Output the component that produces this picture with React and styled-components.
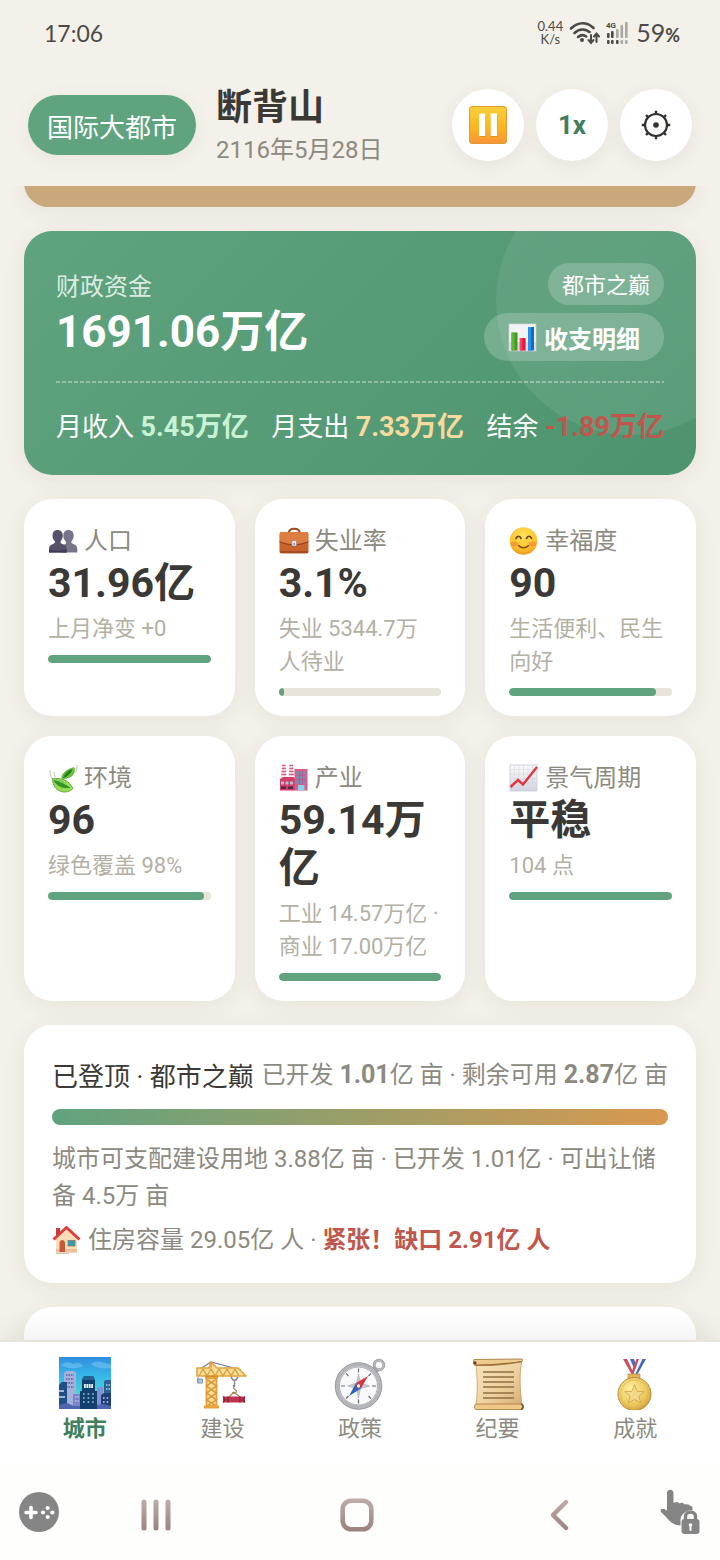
import React from "react";
import styled, { createGlobalStyle } from "styled-components";

const GlobalStyle = createGlobalStyle`
  * {
    box-sizing: border-box;
  }

  body {
    margin: 0;
    background: #f4f1ea;
    color: #3a3935;
    font-family: Roboto, "Noto Sans CJK SC", sans-serif;
  }

  button {
    border: 0;
    padding: 0;
    margin: 0;
    background: none;
    color: inherit;
    font: inherit;
    cursor: pointer;
  }

  h1, p {
    margin: 0;
  }

  svg {
    display: block;
    flex: none;
  }
`;

const Page = styled.div`
  display: flex;
  flex-direction: column;
  height: 100vh;
  overflow: hidden;
`;

/* ---------- status bar ---------- */

const StatusBar = styled.div`
  display: flex;
  align-items: center;
  justify-content: space-between;
  flex: none;
  height: 66px;
  padding: 0 40px 0 44px;
  color: #4b4a46;
`;

const Clock = styled.span`
  font-family: Lato, sans-serif;
  font-size: 23px;
`;

const StatusIcons = styled.div`
  display: flex;
  align-items: center;
  gap: 6px;
`;

const NetSpeed = styled.span`
  font-family: Lato, sans-serif;
  font-size: 13px;
  line-height: 13px;
  text-align: center;
`;

const Battery = styled.span`
  padding-left: 2px;
  font-family: Lato, sans-serif;
  font-size: 25px;
  line-height: 28px;

  small {
    font-size: 18px;
    font-weight: 700;
  }
`;

/* ---------- header ---------- */

const Header = styled.header`
  display: flex;
  align-items: center;
  flex: none;
  gap: 20px;
  height: 120px;
  padding: 0 28px 2px;
`;

const CityRank = styled.span`
  flex: none;
  height: 60px;
  padding: 3px 19px 0;
  border-radius: 30px;
  background: #5fa37f;
  color: #fff;
  font-size: 26px;
  line-height: 60px;
  box-shadow: 0 4px 20px rgba(70, 60, 40, 0.06);
`;

const CityInfo = styled.div`
  flex: 1;
  min-width: 0;
  padding-top: 3px;
`;

const CityName = styled.h1`
  font-size: 36px;
  font-weight: 700;
  line-height: 48px;
`;

const CityDate = styled.p`
  color: #8c8a80;
  font-size: 24px;
  line-height: 37px;
`;

const HeaderActions = styled.div`
  display: flex;
  gap: 12px;
`;

const RoundButton = styled.button`
  display: flex;
  align-items: center;
  justify-content: center;
  width: 72px;
  height: 72px;
  border-radius: 50%;
  background: #fff;
  color: #3f7f60;
  font-size: 26px;
  font-weight: 700;
  box-shadow: 0 4px 20px rgba(70, 60, 40, 0.07);
`;

/* ---------- content ---------- */

const Content = styled.main`
  display: flex;
  flex-direction: column;
  flex: 1;
  gap: 24px;
  min-height: 0;
  padding: 0 24px;
  overflow: hidden;

  > * {
    flex: none;
  }
`;

const Banner = styled.div`
  height: 49px;
  margin-top: -28px;
  border-radius: 28px;
  background: #c9a87c;
  box-shadow: 0 4px 24px rgba(70, 60, 40, 0.07);
`;

const FundsCard = styled.section`
  position: relative;
  padding: 32px 32px 26px;
  border-radius: 28px;
  overflow: hidden;
  background: linear-gradient(135deg, #5fa37f, #4d946e);
  color: #fff;
`;

const FundsShadow = styled.div`
  border-radius: 28px;
  box-shadow: 0 4px 24px rgba(70, 60, 40, 0.07);
`;

const Glow = styled.span`
  position: absolute;
  top: -64px;
  right: -68px;
  width: 268px;
  height: 268px;
  border-radius: 50%;
  background: rgba(255, 255, 255, 0.08);
`;

const FundsTop = styled.div`
  position: relative;
  display: flex;
  align-items: center;
  justify-content: space-between;
`;

const FundsMain = styled.div`
  padding-top: 4px;
`;

const FundsLabel = styled.p`
  color: #dcebe2;
  font-size: 24px;
  line-height: 36px;
`;

const FundsValue = styled.p`
  font-size: 44px;
  font-weight: 700;
  line-height: 54px;
`;

const FundsSide = styled.div`
  display: flex;
  flex-direction: column;
  align-items: flex-end;
  gap: 8px;
`;

const Tag = styled.span`
  padding: 4px 14px 0;
  border-radius: 21px;
  background: rgba(255, 255, 255, 0.2);
  font-size: 22px;
  line-height: 38px;
`;

const DetailButton = styled.button`
  display: flex;
  align-items: center;
  gap: 6px;
  height: 48px;
  padding: 0 24px;
  border-radius: 24px;
  background: rgba(255, 255, 255, 0.2);
  font-size: 24px;
  font-weight: 700;
`;

const Divider = styled.div`
  position: relative;
  height: 2px;
  margin: 20px 0 22px;
  background: repeating-linear-gradient(
    90deg,
    rgba(255, 255, 255, 0.35) 0 4px,
    transparent 4px 6px
  );
`;

const Flows = styled.div`
  position: relative;
  display: flex;
  justify-content: space-between;
  height: 44px;
  font-size: 26px;
  line-height: 44px;
  white-space: nowrap;
`;

const FlowValue = styled.b`
  color: ${(props) => props.$color};
  font-size: 27px;
`;

const StatGrid = styled.div`
  display: grid;
  grid-template-columns: repeat(3, 1fr);
  gap: 20px;
`;

const Card = styled.section`
  border-radius: 28px;
  background: #fff;
  box-shadow: 0 4px 24px rgba(70, 60, 40, 0.07);
`;

const StatCard = styled(Card)`
  padding: 24px 24px 20px;
`;

const StatLabel = styled.div`
  display: flex;
  align-items: center;
  gap: 6px;
  height: 36px;
  color: #8c8a80;
  font-size: 24px;
  line-height: 36px;
`;

const StatValue = styled.p`
  font-size: 41px;
  font-weight: 700;
  line-height: 48px;
`;

const StatNote = styled.p`
  margin: 5px 0 10px;
  color: #b3b0a4;
  font-size: 22px;
  line-height: 33px;
  white-space: pre-line;
`;

const Track = styled.div`
  height: 8px;
  border-radius: 4px;
  overflow: hidden;
  background: #e8e4d9;
`;

const Fill = styled.div`
  height: 100%;
  border-radius: 4px;
  background: #5fa37f;
`;

const LandCard = styled(Card)`
  padding: 28px 28px 26px;
  color: #8c8a80;
  font-size: 24px;
`;

const LandHead = styled.div`
  display: flex;
  align-items: flex-start;
  justify-content: space-between;
  line-height: 44px;
  white-space: nowrap;

  b {
    font-size: 25px;
  }
`;

const LandTitle = styled.span`
  color: #3a3935;
  font-size: 26px;
  line-height: 48px;
`;

const LandBar = styled.div`
  height: 16px;
  margin: 8px 0 16px;
  border-radius: 8px;
  background: linear-gradient(90deg, #5fa37f, #d99850);
`;

const LandText = styled.p`
  line-height: 37px;
`;

const Housing = styled.p`
  display: flex;
  align-items: center;
  gap: 6px;
  margin-top: 8px;
  line-height: 34px;
`;

const Warning = styled.b`
  color: #c0564c;
`;

const NextCard = styled(Card)`
  height: 200px;
`;

/* ---------- bottom navigation ---------- */

const TabBar = styled.nav`
  display: flex;
  flex: none;
  height: 124px;
  padding: 0 16px;
  border-top: 2px solid #e8e4d9;
  background: #fff;
  box-shadow: 0 -4px 28px rgba(70, 60, 40, 0.09);
`;

const Tab = styled.button`
  display: flex;
  flex: 1;
  flex-direction: column;
  align-items: center;
  padding-top: 14px;
  color: ${(props) => (props.$active ? "#3f7f60" : "#8c8a80")};
  font-size: 22px;
  font-weight: ${(props) => (props.$active ? 700 : 400)};
  line-height: 38px;
`;

const SystemBar = styled.div`
  display: grid;
  grid-template-columns: 36px 1fr 1fr 1fr 43px;
  align-items: center;
  flex: none;
  height: 96px;
  padding: 0 17px 0 19px;
  background: #fefefc;
`;

const SystemButton = styled.button`
  display: flex;
  justify-content: ${(props) => (props.$edge ? "flex-start" : "center")};
  padding-top: ${(props) => (props.$edge ? 0 : 6)}px;
`;

/* ---------- icons ---------- */

const WifiIcon = () => (
  <svg width="31" height="24" viewBox="0 0 31 24" fill="none" stroke="#4b4a46" strokeWidth="2.6" strokeLinecap="round">
    <path d="M2 7.5C9 .5 18 .5 24.500 7M5.500 12c4.800-4.600 11-4.600 15.500-.5M9 16c2.600-2.300 5.800-2.300 8.200-.5" />
    <circle cx="13" cy="19" r="2" fill="#4b4a46" stroke="none" />
    <g stroke="#f4f1ea" strokeWidth="5">
      <path d="M22 14v7M27.500 13v7" />
    </g>
    <path strokeWidth="2" d="M22 14v7M19.500 19l2.500 3 2.500-3M27.500 21v-8M25 15.500l2.500-3 2.500 3" />
  </svg>
);

const SignalIcon = () => (
  <svg width="22" height="24" viewBox="0 0 22 24">
    <g fill="#4b4a46">
      <text x="0" y="7" fontSize="8" fontWeight="700" fontFamily="Roboto, sans-serif">4G</text>
      <rect x="1" y="12" width="2.600" height="5" rx="1" />
      <rect x="5" y="10" width="2.600" height="7" rx="1" />
      <rect x="1" y="19" width="2.600" height="4" rx="1" />
      <rect x="5" y="19" width="2.600" height="4" rx="1" />
      <rect x="10" y="19" width="2.600" height="4" rx="1" />
    </g>
    <g fill="#aaa8a2">
      <rect x="10" y="8" width="2.600" height="9" rx="1" />
      <rect x="14.500" y="4" width="2.600" height="13" rx="1" />
      <rect x="19" y="1" width="2.600" height="16" rx="1" />
      <rect x="14.500" y="19" width="2.600" height="4" rx="1" />
      <rect x="19" y="19" width="2.600" height="4" rx="1" />
    </g>
  </svg>
);

const PauseIcon = () => (
  <svg width="38" height="38" viewBox="0 0 38 38">
    <defs>
      <linearGradient id="pause" x1="0" y1="0" x2="0" y2="1">
        <stop offset="0" stopColor="#f9cf3c" />
        <stop offset=".6" stopColor="#fbb41f" />
        <stop offset="1" stopColor="#f6943a" />
      </linearGradient>
    </defs>
    <rect x=".5" y=".5" width="37" height="37" rx="2.500" fill="url(#pause)" stroke="#e39a35" />
    <path d="M10.500 9h6.500v22h-6.500zM22 9h6.500v22H22z" fill="#c98a1e" opacity=".6" />
    <path d="M10 7.500h6.300v22.500H10zM21.700 7.500H28v22.500h-6.300z" fill="#fff" />
  </svg>
);

const GearIcon = () => (
  <svg width="30" height="30" viewBox="0 0 30 30" fill="none" stroke="#33322f" strokeWidth="2.2">
    <circle cx="15" cy="15" r="11" />
    <circle cx="15" cy="15" r="2.800" fill="#33322f" stroke="none" />
    <path
      strokeWidth="2.400"
      d="M15 .8v3.500M15 25.700v3.500M.8 15h3.500M25.700 15h3.500M5 5l2.300 2.300M22.700 22.700L25 25M5 25l2.300-2.300M22.700 7.300L25 5"
    />
  </svg>
);

const BarsIcon = () => (
  <svg width="30" height="30" viewBox="0 0 30 30">
    <rect x="1" y="2" width="27" height="27" fill="#f3f2f7" stroke="#d4d8dc" strokeWidth=".6" />
    <path d="M1 20h27v9H1z" fill="#dcdce4" />
    <rect x="3.500" y="10.500" width="6" height="18" fill="#3f9e1c" />
    <rect x="3.500" y="10.500" width="3" height="18" fill="#62b53c" />
    <rect x="11.800" y="16" width="5.800" height="12.500" fill="#dd1b40" />
    <rect x="11.800" y="16" width="2.500" height="12.500" fill="#f04564" />
    <rect x="20" y="5" width="6" height="23.500" fill="#0c6fd0" />
    <rect x="20" y="5" width="3" height="23.500" fill="#2d92ea" />
  </svg>
);

const PeopleIcon = () => (
  <svg width="30" height="30" viewBox="0 0 30 30">
    <path d="M20.500 4c3.400 0 5.300 2.400 5.200 5.800 0 2.400-1 4.200-2.200 5.300-.5 2 .2 2.500 1.800 3 2.500.8 4 2.200 4 4.900v3.500H13V20l4.500-2c.8-.8.600-2-.2-3-1.400-1.500-2-3.100-2-5.200C15.300 6.400 17.200 4 20.500 4z" fill="#77738a" />
    <path d="M9.500 4c3.400 0 5.400 2.400 5.300 5.800 0 2.400-1 4.200-2.200 5.300-.5 2 .2 2.500 1.800 3 2.700.8 4.300 2.200 4.300 4.900v3.500H1V23c0-2.700 1.500-4.100 4-4.900 1.600-.5 2.300-1 1.800-3-1.300-1.100-2.300-2.900-2.300-5.300C4.500 6.400 6.200 4 9.500 4z" fill="#565168" />
    <path d="M1 23.500c5 1.700 12 1.700 17.700 0v3H1z" fill="#3f3956" />
  </svg>
);

const BriefcaseIcon = () => (
  <svg width="30" height="30" viewBox="0 0 30 30">
    <path d="M9.500 7.500C9.500 1 21 1 21 7.500" fill="none" stroke="#9a4a22" strokeWidth="2" />
    <rect x=".5" y="6" width="29" height="21.500" rx="2" fill="#c9622c" />
    <path d="M1 7c0-.8.500-1 1.500-1h25c1 0 1.500.4 1.500 1v8.500c-8 4-20 4-28 0z" fill="#dd7d42" />
    <path d="M.5 15.500c8.500 4.300 20.500 4.300 29 0" fill="none" stroke="#873c18" strokeWidth="1" />
    <path d="M1 26h28" stroke="#97451e" strokeWidth="1.500" />
    <rect x="12.800" y="14.500" width="4.800" height="5.500" rx="1" fill="#e8e8ec" stroke="#7d6d68" strokeWidth=".5" />
    <path d="M15.200 17v2" stroke="#666" />
  </svg>
);

const SmileIcon = () => (
  <svg width="30" height="30" viewBox="0 0 30 30">
    <defs>
      <radialGradient id="smile" cx=".5" cy=".3" r=".75">
        <stop offset="0" stopColor="#ffe35a" />
        <stop offset=".65" stopColor="#fcc22c" />
        <stop offset="1" stopColor="#ee8f1f" />
      </radialGradient>
    </defs>
    <circle cx="14.500" cy="15" r="13.800" fill="url(#smile)" />
    <ellipse cx="5.500" cy="18" rx="3.500" ry="2.500" fill="#f7743c" opacity=".55" />
    <ellipse cx="23.500" cy="18" rx="3.500" ry="2.500" fill="#f7743c" opacity=".55" />
    <path d="M7 12.500c1-3 4-3 5 0M17.500 12.500c1-3 4-3 5 0" fill="none" stroke="#6b3e0e" strokeWidth="1.700" strokeLinecap="round" />
    <path d="M9.500 19.500c2.500 3 7.500 3 10 0" fill="none" stroke="#8f4a10" strokeWidth="1.400" strokeLinecap="round" />
  </svg>
);

const LeafIcon = () => (
  <svg width="30" height="30" viewBox="0 0 30 30">
    <path d="M2 7c0 4 .5 6 2.500 9M6 9l1 5M29 2c0 4-.5 6-2 8" fill="none" stroke="#b8cfa8" strokeWidth="1" />
    <path d="M14 15.500c-1-4 4-9 12-11C28 10.500 23 16.500 14 15.500z" fill="#6cc53a" stroke="#4f9c2b" strokeWidth=".6" />
    <path d="M15 15c4-1 8-4 9.500-9-4 1-8 4-9.500 9z" fill="#23801a" />
    <path d="M4.500 15.500c9-.5 16 1 20.500 10-5.500 6.500-20.500 4.500-20.500-10z" fill="#93db52" stroke="#4f9c2b" strokeWidth=".8" />
    <path d="M5 16c7 .5 12 4 18.500 9-8 .5-15-.5-18.500-9z" fill="#319522" />
    <path d="M5 16c7 2 12 4.500 19 9" fill="none" stroke="#c2ec8b" strokeWidth=".8" />
  </svg>
);

const FactoryIcon = () => (
  <svg width="30" height="30" viewBox="0 0 30 30">
    <path d="M3 2h3.500l1 13H2zM10.500 2H14l1 13H9.500z" fill="#f8e8ed" />
    <path d="M3 2.500h3.500M2.800 5.500h4M2.600 8.500h4.500M2.300 11.500h5M10.500 2.500H14M10.300 5.500h4M10.100 8.500h4.500M9.800 11.500h5" stroke="#d65a7f" strokeWidth="1.300" />
    <path d="M1 16l3-2h10l2 1v12.500H1z" fill="#d33b68" />
    <rect x="15.500" y="6" width="13" height="21.500" fill="#dd5a80" />
    <path d="M17.500 8h9v13h-9z" fill="#7f8cb8" />
    <path d="M20.500 8v13M23.500 8v13M17.500 12.300h9M17.500 16.600h9" stroke="#c2507a" strokeWidth=".8" />
    <path d="M19 22h6.500v5H19z" fill="#7fd4ee" />
    <path d="M2 18.500h3v3H2zM6.500 18.500h3v3h-3zM11 18.500h3v3h-3z" fill="#b9bdd7" />
    <path d="M2 23.500h5v2.500H2zM9 23.500h5v2.500H9z" fill="#4b2f4d" />
  </svg>
);

const TrendIcon = () => (
  <svg width="30" height="30" viewBox="0 0 30 30">
    <defs>
      <linearGradient id="trend" x1="0" y1="0" x2="0" y2="1">
        <stop offset="0" stopColor="#fbfbfc" />
        <stop offset="1" stopColor="#d3d3df" />
      </linearGradient>
    </defs>
    <rect x="1" y="2" width="27" height="26" fill="url(#trend)" stroke="#c9cad2" strokeWidth=".8" />
    <path d="M5.500 2v26M10 2v26M14.500 2v26M19 2v26M23.500 2v26M1 6.500h27M1 11h27M1 15.500h27M1 20h27M1 24.500h27" stroke="#d7d7e2" strokeWidth=".6" />
    <path d="M1.500 24l7.500-7 5 4.500L28 4" fill="none" stroke="#e03440" strokeWidth="2.400" />
  </svg>
);

const HouseIcon = () => (
  <svg width="30" height="30" viewBox="0 0 30 30">
    <path d="M4 3h4v7H4z" fill="#c93d36" />
    <path d="M4 14L14.500 4 25 14v13.500H4z" fill="#fbdcb9" />
    <path d="M4 24h21v3.500H4z" fill="#edbf9d" />
    <path d="M1.500 14.500L14.500 2.500l13 12" fill="none" stroke="#dc3d3b" strokeWidth="3" strokeLinejoin="round" />
    <path d="M7.500 27v-9c0-4 5.500-4 5.500 0v9z" fill="#c9583a" />
    <rect x="16" y="15.500" width="7" height="5.500" fill="#2e9fb5" stroke="#8a6a5a" strokeWidth=".7" />
    <path d="M4 28.500h13" stroke="#cfc9c4" strokeWidth="1.200" />
  </svg>
);

const CityIcon = () => (
  <svg width="54" height="54" viewBox="0 0 54 54">
    <defs>
      <linearGradient id="sky" x1="0" y1="0" x2="0" y2="1">
        <stop offset="0" stopColor="#2f8fe0" />
        <stop offset=".35" stopColor="#38b5e8" />
        <stop offset=".7" stopColor="#45d3dc" />
        <stop offset="1" stopColor="#8f9fdd" />
      </linearGradient>
    </defs>
    <rect x="1" y="1" width="52" height="52" fill="url(#sky)" />
    <path d="M3 9c4-4 9-3 12-1 4-2 8-1 10 2-6 3-16 3-22-1zM33 8c4-3 9-3 13-1 3 0 5 1 7 2v3c-6 1-14 1-20-4z" fill="#86c9ef" opacity=".5" />
    <path d="M6 17l2-2h8l2 2v35H6z" fill="#a7b2dc" />
    <path d="M8 19h8M8 23h8M8 27h8M8 31h8" stroke="#6474b4" strokeWidth="2" strokeDasharray="1.500 1" />
    <path d="M1 29l3-3h5v27H1z" fill="#1f4f86" />
    <path d="M1 35h5M1 41h6" stroke="#c6dcf0" strokeWidth="1.500" />
    <path d="M39 31h6v20h-6z" fill="#7f92d4" />
    <path d="M15 38h7v15h-7z" fill="#7c83c8" />
    <path d="M17 41h4M17 45h4" stroke="#d7daf4" strokeDasharray="1.500 1" />
    <path d="M46 25l2-1h5v16h-7z" fill="#2a6294" />
    <path d="M48 29h4M48 33h4" stroke="#a9d2e9" strokeWidth="1.500" strokeDasharray="1.500 1" />
    <path d="M24 24l2-4h9l2 4v11h2v18H22V35h2z" fill="#123f6d" />
    <path d="M24 24l2-4h9l2 4z" fill="#236391" />
    <path d="M26 30h9" stroke="#e2f4f8" strokeWidth="4" strokeDasharray="1.800 .6" />
    <path d="M25 38h11M25 42h11M25 46h11" stroke="#9fcbe2" strokeWidth="1.600" strokeDasharray="1.600 3" />
    <path d="M43 39l3-2h7v16H43z" fill="#1f3e78" />
    <path d="M45 42h7M45 46h7" stroke="#c0d5ee" strokeWidth="1.600" strokeDasharray="1.600 2" />
    <path d="M1 49l8-2 7 3h6v3H1zM39 49l6-1 8 2v3H39z" fill="#4f64b0" />
  </svg>
);

const CraneIcon = () => (
  <svg width="54" height="54" viewBox="0 0 54 54" fill="none">
    <path d="M2 15L16 6l30 8" stroke="#7a7f9d" strokeWidth="1.200" />
    <path d="M2 12h12l2-6 6 6h21l8 8H2z" fill="#fae0a0" stroke="#e4a23c" strokeWidth="1.600" strokeLinejoin="round" />
    <path d="M4 20l4-7 4 7 4-7 4 7 4-7 4 7 4-7 4 7 4-7 4 7M16 6v8" stroke="#e4a23c" strokeWidth="1.500" />
    <path d="M10 21h13" stroke="#d68d2c" strokeWidth="3" />
    <path d="M11.500 22h10v28h-10z" fill="#fae0a0" stroke="#e4a23c" strokeWidth="1.800" />
    <path d="M11.500 23l10 7-10 7 10 7-10 6M21.500 23l-10 7 10 7-10 7 10 6" stroke="#df9a38" strokeWidth="1.600" />
    <path d="M9 51h15" stroke="#e4a23c" strokeWidth="3" />
    <path d="M3 21v5M2.500 23h5v4h-5z" fill="#b8cbdc" stroke="#7e94ad" strokeWidth="1" />
    <path d="M36 21l2 3h3l2-3M39.500 24v7" stroke="#8a8698" strokeWidth="1.500" />
    <path d="M38.500 29v3l3 3c0 3-3 3-4 1M39 36l-5 5M39 36l6 5" stroke="#ad865a" strokeWidth="1.200" />
    <path d="M28 40.500h22v6H28z" fill="#bf3550" />
    <path d="M28 40.500l2 3-2 3M50 40.500l-2 3 2 3M33 40.500v6M45 40.500v6" stroke="#7d2037" strokeWidth="1.200" />
  </svg>
);

const CompassIcon = () => (
  <svg width="54" height="54" viewBox="0 0 54 54" fill="none">
    <circle cx="46" cy="9" r="4.600" stroke="#b5b5ba" strokeWidth="3" />
    <circle cx="46" cy="9" r="5.800" stroke="#8f8f94" strokeWidth=".6" />
    <path d="M38 12l5 6 3-3-5-5z" fill="#a5a5aa" />
    <circle cx="25.500" cy="30" r="21.500" fill="#f9f9fc" stroke="#b4b5ba" strokeWidth="4" />
    <circle cx="25.500" cy="30" r="23.300" stroke="#8d8e93" strokeWidth=".7" />
    <circle cx="25.500" cy="30" r="19" stroke="#8d8e93" strokeWidth=".7" />
    <path d="M25.500 12.500v4M25.500 43.500v4M8 30h4M39 30h4M13 17.500l2.500 2.500M38 17.500L35.500 20M13 42.500l2.500-2.500M38 42.500L35.500 40" stroke="#6d6e76" strokeWidth="1.200" />
    <path d="M25.500 18l2 9 9 3-9 2.500-2 9.500-2-9.500-9-2.500 9-3z" fill="#c5ccd2" stroke="#9ca7ad" strokeWidth=".6" />
    <path d="M35 20L28 32.500 23 27z" fill="#d43643" />
    <path d="M16 40l7-13 5 5.500z" fill="#2d62b8" />
    <circle cx="25.500" cy="30" r="2.200" fill="#fff" stroke="#b53949" />
  </svg>
);

const ScrollIcon = () => (
  <svg width="54" height="54" viewBox="0 0 54 54">
    <defs>
      <linearGradient id="paper" x1="0" y1="0" x2="1" y2="1">
        <stop offset="0" stopColor="#f8e5bd" />
        <stop offset=".6" stopColor="#edcf9c" />
        <stop offset="1" stopColor="#d6ad72" />
      </linearGradient>
    </defs>
    <path d="M5 7l46-3c-3 15-2 29 0 45H5c2-15 1-28 0-42z" fill="url(#paper)" stroke="#ba9054" strokeWidth=".7" />
    <path d="M3 3.500C2 8 3 9.500 5 9.500c15 .5 29-.8 45-3.500 2-1 2-2.500 1-3z" fill="#edcb91" stroke="#a97b40" strokeWidth=".9" />
    <path d="M4.500 9c16 0 30-1 46-3.500" fill="none" stroke="#986b35" strokeWidth="1.200" />
    <circle cx="4" cy="7" r="1.700" fill="#6f4823" />
    <path d="M5 48h46c2 0 2 5 0 5.500H5c-2-.5-2-5 0-5.500z" fill="#edc988" stroke="#ae8044" strokeWidth=".9" />
    <path d="M50 48c2.500.5 2.500 5 0 5.500" fill="none" stroke="#7e532a" strokeWidth="1.600" />
    <path d="M12 16h31M12 21h31M12 26h31M12 31h31M12 37h31M12 42h31" stroke="#8e7043" strokeWidth="1.300" />
  </svg>
);

const MedalIcon = () => (
  <svg width="54" height="54" viewBox="0 0 54 54">
    <defs>
      <radialGradient id="gold" cx=".4" cy=".35" r=".7">
        <stop offset="0" stopColor="#fff0a2" />
        <stop offset=".7" stopColor="#ecc757" />
        <stop offset="1" stopColor="#cf9b3c" />
      </radialGradient>
    </defs>
    <path d="M15 3h5l9 16h-5z" fill="#c84e61" />
    <path d="M19 3h3l7 15h-3z" fill="#f2f2f7" />
    <path d="M22 3h4l3 8-1 6z" fill="#496bb6" />
    <path d="M38 3h-5l-9 16h5z" fill="#3f67ba" />
    <path d="M34.500 3h-3L25 18h2.500z" fill="#f2f2f7" />
    <path d="M31 3h-2.500L24 15l1 4z" fill="#c84e61" />
    <path d="M20 18h12v5H20z" fill="#e0b65a" stroke="#b5883c" strokeWidth=".7" />
    <circle cx="26.500" cy="38" r="16.500" fill="url(#gold)" stroke="#b5883c" strokeWidth="1" />
    <circle cx="26.500" cy="38" r="14" fill="none" stroke="#d9b558" strokeWidth=".8" />
    <path d="M26.500 28.500l2.700 6.800 7 .4-5.300 4.500 1.800 6.800-6.200-3.700-6.200 3.700 1.800-6.800-5.300-4.500 7-.4z" fill="#f3d98a" stroke="#c9a146" strokeWidth=".8" />
  </svg>
);

const GamepadIcon = () => (
  <svg width="40" height="40" viewBox="0 0 40 40">
    <circle cx="20" cy="20" r="20" fill="#858585" />
    <path d="M12 15.500v10M7 20.500h10" stroke="#fff" strokeWidth="3.600" strokeLinecap="round" />
    <g fill="#fff">
      <circle cx="28.700" cy="16" r="2.100" />
      <circle cx="28.700" cy="25" r="2.100" />
      <circle cx="24" cy="20.500" r="2.100" />
      <circle cx="33.400" cy="20.500" r="2.100" />
    </g>
  </svg>
);

const RecentsIcon = () => (
  <svg width="32" height="34" viewBox="0 0 32 34">
    <defs>
      <linearGradient id="keys" gradientUnits="userSpaceOnUse" x1="0" y1="0" x2="0" y2="34">
        <stop offset="0" stopColor="#bfaeaa" />
        <stop offset="1" stopColor="#9a807c" />
      </linearGradient>
    </defs>
    <path d="M4 4v26M16 4v26M28 4v26" stroke="url(#keys)" strokeWidth="5" strokeLinecap="round" />
  </svg>
);

const HomeIcon = () => (
  <svg width="34" height="34" viewBox="0 0 34 34">
    <rect x="2.700" y="2.700" width="28.600" height="28.600" rx="8.500" fill="none" stroke="url(#keys)" strokeWidth="4.600" />
  </svg>
);

const BackIcon = () => (
  <svg width="20" height="34" viewBox="0 0 20 34">
    <path d="M17 4L4 17l13 13" fill="none" stroke="url(#keys)" strokeWidth="4.400" strokeLinecap="round" strokeLinejoin="round" />
  </svg>
);

const TouchLockIcon = () => (
  <svg width="41" height="46" viewBox="0 0 41 46">
    <path
      d="M7 4c0-4.500 6.500-4.500 6.500 0v10c3-2 5-1 5.800.5 2.200-1.500 4.500-.8 5.200 1 2.500-1 5.500.3 6 1.500 1-.3 2 .5 2 2v2c-7 0-12 5-12 10v5.500C12 36 10 32 5 27c-3-3-4.500-4-4.500-6 1.500-2.500 4-1 6.500.5z"
      fill="#858585"
    />
    <path d="M25.500 31v-3.500c0-6 10-6 10 0V31" fill="none" stroke="#858585" strokeWidth="3.400" />
    <rect x="21.500" y="30" width="18" height="15" rx="3" fill="#858585" />
    <path d="M30.500 37v4" stroke="#fff" strokeWidth="2" strokeLinecap="round" />
    <circle cx="30.500" cy="36" r="1.800" fill="#fff" />
  </svg>
);

/* ---------- data ---------- */

const stats = [
  { icon: PeopleIcon, label: "人口", value: "31.96亿", note: "上月净变 +0", percent: 100 },
  { icon: BriefcaseIcon, label: "失业率", value: "3.1%", note: "失业 5344.7万\n人待业", percent: 3.1 },
  { icon: SmileIcon, label: "幸福度", value: "90", note: "生活便利、民生向好", percent: 90 },
  { icon: LeafIcon, label: "环境", value: "96", note: "绿色覆盖 98%", percent: 96 },
  { icon: FactoryIcon, label: "产业", value: "59.14万亿", note: "工业 14.57万亿 · 商业 17.00万亿", percent: 100 },
  { icon: TrendIcon, label: "景气周期", value: "平稳", note: "104 点", percent: 100 },
];

const flows = [
  { label: "月收入", value: "5.45万亿", color: "#c9f2d4" },
  { label: "月支出", value: "7.33万亿", color: "#f8d9a0" },
  { label: "结余", value: "-1.89万亿", color: "#c0564c" },
];

const tabs = [
  { icon: CityIcon, label: "城市" },
  { icon: CraneIcon, label: "建设" },
  { icon: CompassIcon, label: "政策" },
  { icon: ScrollIcon, label: "纪要" },
  { icon: MedalIcon, label: "成就" },
];

const App = () => {
  const renderStats = () =>
    stats.map(({ icon: Icon, label, value, note, percent }) => (
      <StatCard key={label}>
        <StatLabel>
          <Icon />
          {label}
        </StatLabel>
        <StatValue>{value}</StatValue>
        <StatNote>{note}</StatNote>
        <Track>
          <Fill style={{ width: `${percent}%` }} />
        </Track>
      </StatCard>
    ));

  return (
    <Page>
      <GlobalStyle />

      <StatusBar>
        <Clock>17:06</Clock>
        <StatusIcons>
          <NetSpeed>
            0.44
            <br />
            K/s
          </NetSpeed>
          <WifiIcon />
          <SignalIcon />
          <Battery>
            59<small>%</small>
          </Battery>
        </StatusIcons>
      </StatusBar>

      <Header>
        <CityRank>国际大都市</CityRank>
        <CityInfo>
          <CityName>断背山</CityName>
          <CityDate>2116年5月28日</CityDate>
        </CityInfo>
        <HeaderActions>
          <RoundButton aria-label="暂停">
            <PauseIcon />
          </RoundButton>
          <RoundButton>1x</RoundButton>
          <RoundButton aria-label="设置">
            <GearIcon />
          </RoundButton>
        </HeaderActions>
      </Header>

      <Content>
        <Banner />

        <FundsShadow>
          <FundsCard>
            <Glow />
            <FundsTop>
              <FundsMain>
                <FundsLabel>财政资金</FundsLabel>
                <FundsValue>1691.06万亿</FundsValue>
              </FundsMain>
              <FundsSide>
                <Tag>都市之巅</Tag>
                <DetailButton>
                  <BarsIcon />
                  收支明细
                </DetailButton>
              </FundsSide>
            </FundsTop>
            <Divider />
            <Flows>
              {flows.map((flow) => (
                <span key={flow.label}>
                  {flow.label} <FlowValue $color={flow.color}>{flow.value}</FlowValue>
                </span>
              ))}
            </Flows>
          </FundsCard>
        </FundsShadow>

        <StatGrid>{renderStats()}</StatGrid>

        <LandCard>
          <LandHead>
            <LandTitle>已登顶 · 都市之巅</LandTitle>
            <span>
              已开发 <b>1.01</b>亿 亩 · 剩余可用 <b>2.87</b>亿 亩
            </span>
          </LandHead>
          <LandBar />
          <LandText>
            城市可支配建设用地 3.88亿 亩 · 已开发 1.01亿 · 可出让储备 4.5万 亩
          </LandText>
          <Housing>
            <HouseIcon />
            <span>
              住房容量 29.05亿 人 · <Warning>紧张！缺口 2.91亿 人</Warning>
            </span>
          </Housing>
        </LandCard>

        <NextCard />
      </Content>

      <TabBar>
        {tabs.map(({ icon: Icon, label }, index) => (
          <Tab key={label} $active={index === 0}>
            <Icon />
            {label}
          </Tab>
        ))}
      </TabBar>

      <SystemBar>
        <SystemButton $edge aria-label="游戏工具">
          <GamepadIcon />
        </SystemButton>
        <SystemButton aria-label="最近任务">
          <RecentsIcon />
        </SystemButton>
        <SystemButton aria-label="主屏幕">
          <HomeIcon />
        </SystemButton>
        <SystemButton aria-label="返回">
          <BackIcon />
        </SystemButton>
        <SystemButton $edge aria-label="锁定触摸">
          <TouchLockIcon />
        </SystemButton>
      </SystemBar>
    </Page>
  );
};

export default App;
